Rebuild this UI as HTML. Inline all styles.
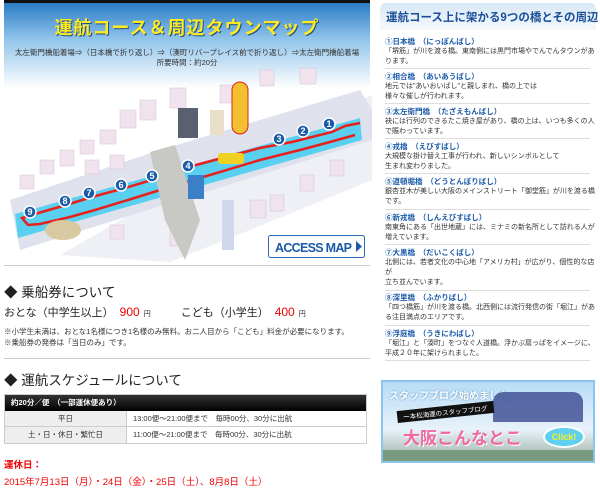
<!DOCTYPE html>
<html><head><meta charset="utf-8"><style>
*{margin:0;padding:0;box-sizing:border-box}
body{width:600px;height:490px;overflow:hidden;background:#fff;font-family:"Liberation Sans","Noto Sans CJK JP",sans-serif;color:#333;position:relative}
.a{position:absolute}
.r .it{position:absolute;left:385px;width:210px;font-size:7px;line-height:10px;color:#333}
.r .it b{display:block;color:#1a5aa8;font-weight:bold;font-size:7.5px}
.r .ln{position:absolute;left:385px;width:205px;border-top:1px solid #ddd}
</style></head><body>
<!-- map -->
<div class="a" style="left:4px;top:0;width:366px;height:3px;background:#111"></div>
<div class="a" style="left:4px;top:3px;width:366px;height:100px;background:linear-gradient(#2a7cc4,#8ec2ea 35%,#fff 85%)"></div>
<div class="a" style="left:4px;top:14px;width:366px;text-align:center;font-size:18px;font-weight:bold;color:#ffea20;letter-spacing:1px;text-shadow:1px 1px 0 #1a4f90">運航コース＆周辺タウンマップ</div>
<div class="a" style="left:4px;top:48px;width:366px;text-align:center;font-size:7.5px;line-height:10px;color:#333">太左衛門橋船着場⇒（日本橋で折り返し）⇒（湊町リバープレイス前で折り返し）⇒太左衛門橋船着場<br>所要時間：約20分</div>
<svg class="a" style="left:0;top:60px" width="372" height="205" viewBox="0 60 372 205">
<polygon points="60,255 200,175 372,95 372,180 250,230 170,262" fill="#eef0f6"/>
<polygon points="10,200 160,150 360,90 372,110 372,140 180,200 20,250" fill="#dfe2ec"/>
<g fill="#f1e3ee" stroke="#cfc0d0" stroke-width=".5">
<rect x="40" y="160" width="14" height="14"/><rect x="60" y="150" width="14" height="16"/><rect x="80" y="140" width="14" height="14"/><rect x="100" y="130" width="16" height="14"/><rect x="120" y="110" width="16" height="18"/><rect x="140" y="100" width="16" height="20"/><rect x="170" y="88" width="16" height="20"/><rect x="220" y="85" width="14" height="18"/><rect x="260" y="70" width="14" height="16"/><rect x="300" y="68" width="16" height="16"/><rect x="110" y="225" width="14" height="14"/><rect x="170" y="230" width="14" height="16"/><rect x="250" y="200" width="16" height="18"/><rect x="270" y="195" width="14" height="16"/><rect x="300" y="175" width="14" height="16"/><rect x="330" y="160" width="14" height="16"/><rect x="20" y="175" width="14" height="14"/><rect x="85" y="160" width="14" height="14"/><rect x="110" y="155" width="14" height="14"/></g>
<rect x="178" y="108" width="20" height="30" fill="#596070"/><rect x="210" y="110" width="14" height="25" fill="#eadfc8"/>
<rect x="232" y="82" width="16" height="52" rx="8" fill="#f3c030" stroke="#e02020"/>
<polygon points="15,214 360,118 362,140 18,238" fill="#5ad0f0"/>
<polyline points="360,123 345,126 332,132 300,140 292,142 260,148 196,165 158,178 125,188 92,197 66,205 35,214 22,218 28,225 40,224 70,217 95,210 128,200 160,190 200,178 260,160 300,150 330,142 355,135" fill="none" stroke="#e8201c" stroke-width="2.5"/>
<polygon points="150,152 175,145 200,220 185,260 165,220" fill="#c8c8c4"/>
<rect x="218" y="153" width="26" height="11" rx="3" fill="#f0d020"/>
<rect x="188" y="175" width="16" height="24" fill="#3a7fc8"/>
<rect x="222" y="200" width="12" height="50" fill="#cfd7ea"/>
<ellipse cx="63" cy="230" rx="18" ry="10" fill="#d8c9a0"/>
<g font-family="Liberation Sans" font-weight="bold" font-size="9" fill="#fff" text-anchor="middle">
<g fill="#1a5ca8" stroke="#fff" stroke-width="1.5"><circle cx="329" cy="124" r="6"/><circle cx="303" cy="131" r="6"/><circle cx="279" cy="139" r="6"/><circle cx="188" cy="166" r="6"/><circle cx="152" cy="176" r="6"/><circle cx="121" cy="185" r="6"/><circle cx="89" cy="193" r="6"/><circle cx="65" cy="201" r="6"/><circle cx="30" cy="212" r="6"/></g>
<text x="329" y="127">1</text><text x="303" y="134">2</text><text x="279" y="142">3</text><text x="188" y="169">4</text><text x="152" y="179">5</text><text x="121" y="188">6</text><text x="89" y="196">7</text><text x="65" y="204">8</text><text x="30" y="215">9</text></g>
<rect x="268.5" y="235.5" width="96" height="22" rx="2" fill="#fff" stroke="#2a6cb8"/>
<text x="275" y="252" font-family="Liberation Sans" font-weight="bold" font-size="12.5" fill="#1a5aa8" textLength="77">ACCESS MAP</text>
<polygon points="356,241 362,246.5 356,252" fill="#1a5aa8"/>
</svg>
<div class="a" style="left:4px;top:265px;width:366px;border-top:1px solid #ccc"></div>
<div class="a" style="left:4px;top:281px;font-size:13.5px;color:#222">◆ 乗船券について</div>
<div class="a" style="left:4px;top:304px;font-size:11px;color:#222;white-space:nowrap">おとな（中学生以上）<span style="color:#e00;font-size:12px;margin-left:6px">900</span><span style="font-size:7px;margin-left:4px">円</span><span style="margin-left:30px">こども（小学生）</span><span style="color:#e00;font-size:12px;margin-left:6px">400</span><span style="font-size:7px;margin-left:4px">円</span></div>
<div class="a" style="left:4px;top:326px;font-size:7.5px;line-height:11px;color:#333;white-space:nowrap">※小学生未満は、おとな1名様につき1名様のみ無料。お二人目から「こども」料金が必要になります。<br>※乗船券の発券は「当日のみ」です。</div>
<div class="a" style="left:4px;top:358px;width:366px;border-top:1px solid #ccc"></div>
<div class="a" style="left:4px;top:369px;font-size:13.5px;color:#222">◆ 運航スケジュールについて</div>
<div class="a" style="left:4px;top:394px;width:363px;height:50px;border:1px solid #ccc;background:#fff">
<div style="height:16px;background:linear-gradient(#333,#000);color:#fff;font-size:7.5px;font-weight:bold;line-height:16px;padding-left:6px">約20分／便　（一部運休便あり）</div>
<div style="display:flex;height:16px;border-bottom:1px solid #ccc;font-size:7.5px;line-height:16px"><div style="width:122px;background:#eee;text-align:center;border-right:1px solid #ccc">平日</div><div style="padding-left:6px">13:00便～21:00便まで　毎時00分、30分に出航</div></div>
<div style="display:flex;height:16px;font-size:7.5px;line-height:16px"><div style="width:122px;background:#eee;text-align:center;border-right:1px solid #ccc">土・日・休日・繁忙日</div><div style="padding-left:6px">11:00便～21:00便まで　毎時00分、30分に出航</div></div>
</div>
<div class="a" style="left:4px;top:457px;font-size:9.5px;color:#e00;font-weight:bold">運休日：</div>
<div class="a" style="left:4px;top:474px;font-size:9.5px;color:#e00;white-space:nowrap">2015年7月13日（月）・24日（金）・25日（土）、8月8日（土）</div>
<!-- right -->
<div class="r">
<div class="a" style="left:380px;top:3px;width:216px;height:27px;border-radius:6px 6px 0 0;background:linear-gradient(#d8e8f6,#f4f8fc);"></div>
<div class="a" style="left:386px;top:9px;font-size:11.5px;color:#1a4f98;font-weight:bold;white-space:nowrap">運航コース上に架かる9つの橋とその周辺</div>
<div class="it" style="top:37px"><b>①日本橋　（にっぽんばし）</b>「堺筋」が川を渡る橋。東南側には黒門市場やでんでんタウンがあります。</div><div class="ln" style="top:68px"></div>
<div class="it" style="top:72px"><b>②相合橋　（あいあうばし）</b>地元では"あいおいばし"と親しまれ、橋の上では<br>様々な催しが行われます。</div><div class="ln" style="top:103px"></div>
<div class="it" style="top:107px"><b>③太左衛門橋　（たざえもんばし）</b>袂には行列のできるたこ焼き屋があり、橋の上は、いつも多くの人で賑わっています。</div><div class="ln" style="top:138px"></div>
<div class="it" style="top:142px"><b>④戎橋　（えびすばし）</b>大規模な掛け替え工事が行われ、新しいシンボルとして<br>生まれ変わりました。</div><div class="ln" style="top:173px"></div>
<div class="it" style="top:177px"><b>⑤道頓堀橋　（どうとんぼりばし）</b>銀杏並木が美しい大阪のメインストリート「御堂筋」が川を渡る橋です。</div><div class="ln" style="top:209px"></div>
<div class="it" style="top:213px"><b>⑥新戎橋　（しんえびすばし）</b>南東角にある「出世地蔵」には、ミナミの新名所として訪れる人が増えています。</div><div class="ln" style="top:244px"></div>
<div class="it" style="top:248px"><b>⑦大黒橋　（だいこくばし）</b>北側には、若者文化の中心地「アメリカ村」が広がり、個性的な店が<br>立ち並んでいます。</div><div class="ln" style="top:290px"></div>
<div class="it" style="top:293px"><b>⑧深里橋　（ふかりばし）</b>「四つ橋筋」が川を渡る橋。北西側には流行発信の街「堀江」がある注目満点のエリアです。</div><div class="ln" style="top:325px"></div>
<div class="it" style="top:329px"><b>⑨浮庭橋　（うきにわばし）</b>「堀江」と「湊町」をつなぐ人道橋。浮かぶ扇っぱをイメージに、平成２０年に架けられました。</div><div class="ln" style="top:360px"></div>
</div>
<div class="a" style="left:381px;top:380px;width:214px;height:83px;border:2px solid #8cc4f0;background:linear-gradient(#b8dcf6,#e8f2fa 60%,#9ab0a0);overflow:hidden">
<div class="a" style="left:6px;top:5px;font-size:10px;font-weight:bold;color:#fff;text-shadow:0 0 2px #4a8ac0">スタッフブログ始めました。</div>
<div class="a" style="left:110px;top:10px;width:90px;height:30px;background:#3a4a90;border-radius:10px 10px 0 0;opacity:.8"></div>
<div class="a" style="left:14px;top:24px;background:#111;color:#fff;font-size:6.5px;padding:1px 6px;transform:rotate(-6deg)">一本松海運のスタッフブログ</div>
<div class="a" style="left:20px;top:42px;font-size:17px;font-weight:bold;color:#f06aa0;text-shadow:1px 1px 0 #fff">大阪こんなとこ</div>
<div class="a" style="left:160px;top:44px;width:42px;height:22px;border-radius:50%;background:#5fd0f0;border:2px solid #fff;color:#f8f020;font-size:9px;font-weight:bold;text-align:center;line-height:18px">Click!</div>
<div class="a" style="left:0;top:68px;width:214px;height:13px;background:#7a9a80"></div>
</div>
</body></html>
